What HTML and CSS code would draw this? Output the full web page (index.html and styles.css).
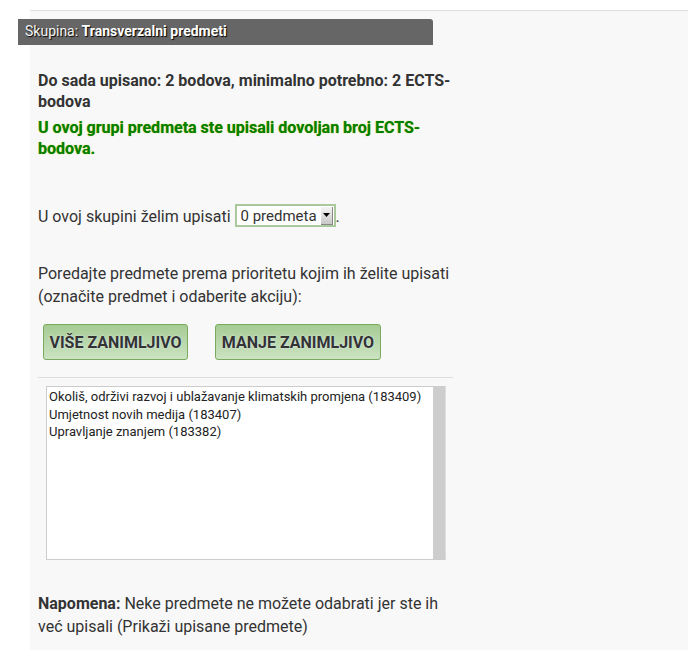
FILE: index.html
```html
<!DOCTYPE html>
<html lang="hr">
<head>
<meta charset="utf-8">
<title>Skupina</title>
<link rel="stylesheet" href="styles.css">
</head>
<body>
<div class="panel">
  <div class="group-head">Skupina: <b>Transverzalni predmeti</b></div>
  <div class="content">
    <p class="status">Do sada upisano: 2 bodova, minimalno potrebno: 2 ECTS-bodova</p>
    <p class="ok">U ovoj grupi predmeta ste upisali dovoljan broj ECTS-bodova.</p>
    <p class="choose">U ovoj skupini želim upisati <span class="select"><span class="select-text">0 predmeta</span><span class="select-arrow"><svg width="7" height="4" viewBox="0 0 7 4"><path d="M0 0H7L3.5 4Z" fill="#000"/></svg></span></span>.</p>
    <p class="hint">Poredajte predmete prema prioritetu kojim ih želite upisati (označite predmet i odaberite akciju):</p>
    <div class="actions">
      <button class="btn">VIŠE ZANIMLJIVO</button>
      <button class="btn">MANJE ZANIMLJIVO</button>
    </div>
    <hr class="sep">
    <div class="listbox">
      <div class="items">
        <div class="item">Okoliš, održivi razvoj i ublažavanje klimatskih promjena (183409)</div>
        <div class="item">Umjetnost novih medija (183407)</div>
        <div class="item">Upravljanje znanjem (183382)</div>
      </div>
      <div class="scroll"></div>
    </div>
    <p class="note"><b>Napomena:</b> Neke predmete ne možete odabrati jer ste ih već upisali (Prikaži upisane predmete)</p>
  </div>
</div>
</body>
</html>
```
FILE: styles.css
```css
html, body {
  margin: 0;
  padding: 0;
  background: #fff;
}
body {
  font-family: Roboto, "Liberation Sans", sans-serif;
  color: #333;
}
.panel {
  margin: 10px 0 0 30px;
  border-top: 1px solid #ddd;
  background: #f8f8f8;
  height: 639px;
  padding-top: 8px;
}
.group-head {
  margin-left: -12px;
  width: 408px;
  height: 26px;
  line-height: 25px;
  padding-left: 7px;
  background: #666;
  color: #f4f4f4;
  font-size: 14px;
  border-top-right-radius: 3px;
  text-shadow: 1px 1px 1px #000;
}
.group-head b {
  color: #fff;
}
.content {
  padding-left: 8px;
  width: 418px;
}
.content p {
  margin: 0;
  font-size: 16px;
}
.status {
  margin-top: 25px !important;
  font-weight: bold;
  line-height: 21px;
}
.ok {
  margin-top: 5px !important;
  font-weight: bold;
  line-height: 21px;
  color: #008000;
  text-shadow: 0 0 1px #b0b000;
}
.choose {
  margin-top: 46px !important;
  line-height: 23px;
}
.select {
  display: inline-flex;
  align-items: center;
  vertical-align: middle;
  box-sizing: border-box;
  height: 23px;
  width: 101px;
  border: 2px solid #a9c89b;
  background: #fff;
  margin-top: -4px;
  padding-left: 4px;
}
.select-text {
  flex: 1;
  font-size: 15px;
  line-height: 18px;
}
.select-arrow {
  display: flex;
  align-items: center;
  justify-content: center;
  width: 11px;
  height: 17px;
  margin-right: 1px;
  background: linear-gradient(#f4f4f4, #c8c8c8);
  border-right: 1px solid #888;
  border-bottom: 1px solid #888;
}
.hint {
  margin-top: 34px !important;
  line-height: 23px;
}
.actions {
  display: flex;
  gap: 27px;
  margin: 16px 0 0 5px;
}
.btn {
  height: 36px;
  padding: 0 5px;
  font-family: Roboto, "Liberation Sans", sans-serif;
  font-size: 16px;
  font-weight: bold;
  color: #333;
  border: 1px solid #79aa5e;
  border-radius: 3px;
  background: linear-gradient(#a6cc95, #cbe3c1);
  text-shadow: 0 0 2px #e8f0ff;
}
.btn:first-child {
  width: 145px;
}
.btn:last-child {
  width: 166px;
}
.sep {
  margin: 17px 0 0 0;
  width: 415px;
  border: 0;
  border-top: 1px solid #ddd;
  height: 0;
}
.listbox {
  display: flex;
  margin: 8px 0 0 8px;
  width: 400px;
  height: 174px;
  box-sizing: border-box;
  border: 1px solid #ccc;
  border-right-color: #ddd;
  background: #fff;
}
.items {
  flex: 1;
  padding: 1px 2px;
  font-size: 13px;
  line-height: 17.5px;
  color: #222;
}
.scroll {
  width: 12px;
  background: #cdcdcd;
}
.note {
  margin-top: 32px !important;
  line-height: 23px;
}
.note b {
  font-weight: bold;
}
```
